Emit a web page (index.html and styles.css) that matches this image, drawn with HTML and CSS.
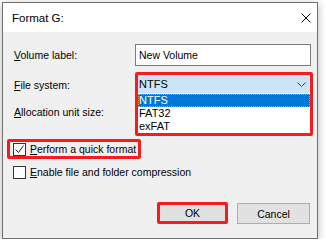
FILE: index.html
```html
<!DOCTYPE html>
<html lang="en">
<head>
  <meta charset="UTF-8">
  <title>Format G:</title>
  <link rel="stylesheet" href="styles.css">
</head>
<body>
  <div class="window">
    <div class="titlebar">
      <span class="title">Format G:</span>
      <span class="close">
        <svg width="10" height="10" viewBox="0 0 10 10"><path d="M0.5 0.5 L9.5 9.5 M9.5 0.5 L0.5 9.5" stroke="#000" stroke-width="1" fill="none"/></svg>
      </span>
    </div>

    <div class="content">
      <div class="fields">
        <label class="field-label vol-label"><u>V</u>olume label:</label>
        <div class="textbox">New Volume</div>

        <label class="field-label fs-label"><u>F</u>ile system:</label>
        <div class="select-wrap">
          <div class="combo">
            <span>NTFS</span>
            <svg width="9" height="5" viewBox="0 0 9 5"><path d="M0.5 0.5 L4.5 4.5 L8.5 0.5" stroke="#404040" stroke-width="1" fill="none"/></svg>
          </div>
          <ul class="list">
            <li class="selected">NTFS</li>
            <li>FAT32</li>
            <li>exFAT</li>
          </ul>
        </div>

        <label class="field-label alloc-label"><u>A</u>llocation unit size:</label>
      </div>

      <label class="check check-marked">
        <span class="box">
          <svg width="11" height="11" viewBox="0 0 11 11"><path d="M1.5 5.5 L4.5 8.5 L9.5 1.5" stroke="#222" stroke-width="1" fill="none"/></svg>
        </span>
        <span><u>P</u>erform a quick format</span>
      </label>
      <label class="check">
        <span class="box"></span>
        <span><u>E</u>nable file and folder compression</span>
      </label>

      <div class="buttons">
        <button class="btn btn-ok">OK</button>
        <button class="btn">Cancel</button>
      </div>
    </div>
  </div>
</body>
</html>
```

FILE: styles.css
```css
body {
  margin: 0;
  padding: 2px 0 0 2px;
  background-color: #ffffff;
  font-family: "Liberation Sans", Arial, sans-serif;
  font-size: 10.5px;
  color: #000;
}

.window {
  width: 316px;
  height: 237px;
  box-sizing: border-box;
  border: 1px solid #707070;
  box-shadow: 0 2px 8px rgba(0, 0, 0, 0.3);
  display: flex;
  flex-direction: column;
}

.titlebar {
  height: 29px;
  background-color: #fff;
  display: flex;
  align-items: center;
  justify-content: space-between;
  padding: 0 6px 0 9px;
}

.title {
  font-size: 11.5px;
}

.close svg {
  display: block;
}

.content {
  flex: 1;
  background-color: #f0f0f0;
  padding: 12px 7px 14px 11px;
  display: flex;
  flex-direction: column;
}

.fields {
  display: grid;
  grid-template-columns: 121px 178px;
  grid-template-rows: 22px 27px 31px;
  row-gap: 6px;
}

.field-label {
  line-height: 14px;
}

.vol-label {
  align-self: center;
}

.fs-label {
  grid-row: 2;
  margin-top: 6px;
}

.alloc-label {
  grid-row: 3;
  grid-column: 1;
}

.textbox {
  width: 176px;
  height: 22px;
  box-sizing: border-box;
  border: 1px solid #7a7a7a;
  background-color: #fff;
  padding-left: 3px;
  line-height: 20px;
}

.select-wrap {
  grid-column: 2;
  grid-row: 2 / span 2;
  border: 3px solid #f41c1c;
  border-radius: 2px;
  display: flex;
  flex-direction: column;
  gap: 1px;
  background-color: #fff;
}

.combo {
  height: 18px;
  background-color: #cce4f7;
  display: flex;
  align-items: center;
  justify-content: space-between;
  padding: 0 4px 0 1px;
  font-size: 11px;
}

.combo svg {
  display: block;
}

.list {
  list-style: none;
  margin: 0;
  padding: 0;
  font-size: 11px;
}

.list li {
  height: 13px;
  line-height: 13px;
  padding-left: 1px;
}

.list .selected {
  background-color: #0078d7;
  color: #fff;
  outline: 1px dotted #e49a3c;
  outline-offset: -1px;
}

.check {
  display: flex;
  align-items: center;
  gap: 4px;
  align-self: flex-start;
  margin-left: -1px;
  line-height: 14px;
}

.check-marked {
  margin: 3px 0 6px -7px;
  border: 3px solid #f41c1c;
  border-radius: 2px;
  padding: 0 2px 0 3px;
  height: 14px;
}

.box {
  width: 13px;
  height: 13px;
  box-sizing: border-box;
  border: 1px solid #333;
  background-color: #fff;
  display: flex;
  align-items: center;
  justify-content: center;
}

.box svg {
  display: block;
}

.buttons {
  margin-top: auto;
  display: flex;
  justify-content: flex-end;
  align-items: flex-end;
  gap: 9px;
}

.btn {
  width: 73px;
  height: 21px;
  box-sizing: border-box;
  border: 1px solid #adadad;
  background-color: #e1e1e1;
  font-family: "Liberation Sans", Arial, sans-serif;
  font-size: 10.5px;
  color: #000;
  padding: 0;
}

.btn-ok {
  width: 71px;
  height: 22px;
  border: 3px solid #f41c1c;
  border-radius: 2px;
}
```
